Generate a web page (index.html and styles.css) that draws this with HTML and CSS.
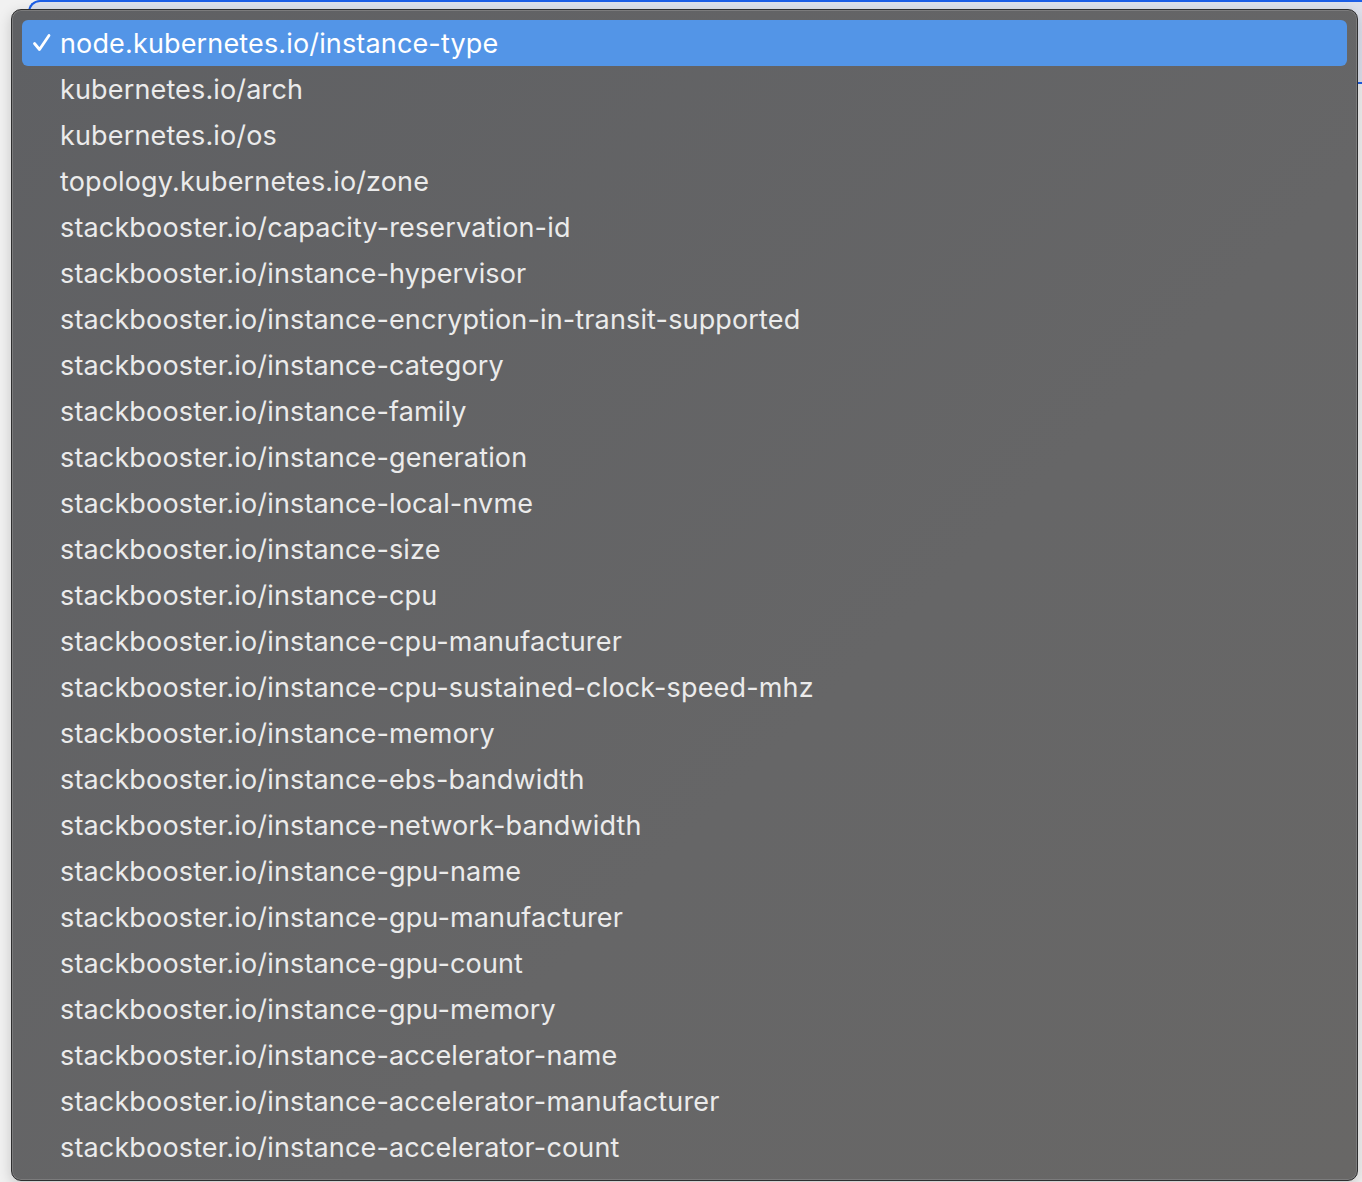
FILE: index.html
```html
<!DOCTYPE html>
<html lang="en">
<head>
<meta charset="utf-8">
<title>Select</title>
<link rel="stylesheet" href="styles.css">
</head>
<body>
<div class="select-field"></div>
<div class="menu" role="listbox">
  <div class="option selected"><svg class="check" width="20" height="20" viewBox="0 0 20 20"><path d="M2.5 10.5 L7.5 16.5 L17 2.5" fill="none" stroke="#ffffff" stroke-width="2.8" stroke-linecap="round" stroke-linejoin="round"/></svg><span class="label">node.kubernetes.io/instance-type</span></div>
  <div class="option"><span class="label">kubernetes.io/arch</span></div>
  <div class="option"><span class="label">kubernetes.io/os</span></div>
  <div class="option"><span class="label">topology.kubernetes.io/zone</span></div>
  <div class="option"><span class="label">stackbooster.io/capacity-reservation-id</span></div>
  <div class="option"><span class="label">stackbooster.io/instance-hypervisor</span></div>
  <div class="option"><span class="label">stackbooster.io/instance-encryption-in-transit-supported</span></div>
  <div class="option"><span class="label">stackbooster.io/instance-category</span></div>
  <div class="option"><span class="label">stackbooster.io/instance-family</span></div>
  <div class="option"><span class="label">stackbooster.io/instance-generation</span></div>
  <div class="option"><span class="label">stackbooster.io/instance-local-nvme</span></div>
  <div class="option"><span class="label">stackbooster.io/instance-size</span></div>
  <div class="option"><span class="label">stackbooster.io/instance-cpu</span></div>
  <div class="option"><span class="label">stackbooster.io/instance-cpu-manufacturer</span></div>
  <div class="option"><span class="label">stackbooster.io/instance-cpu-sustained-clock-speed-mhz</span></div>
  <div class="option"><span class="label">stackbooster.io/instance-memory</span></div>
  <div class="option"><span class="label">stackbooster.io/instance-ebs-bandwidth</span></div>
  <div class="option"><span class="label">stackbooster.io/instance-network-bandwidth</span></div>
  <div class="option"><span class="label">stackbooster.io/instance-gpu-name</span></div>
  <div class="option"><span class="label">stackbooster.io/instance-gpu-manufacturer</span></div>
  <div class="option"><span class="label">stackbooster.io/instance-gpu-count</span></div>
  <div class="option"><span class="label">stackbooster.io/instance-gpu-memory</span></div>
  <div class="option"><span class="label">stackbooster.io/instance-accelerator-name</span></div>
  <div class="option"><span class="label">stackbooster.io/instance-accelerator-manufacturer</span></div>
  <div class="option"><span class="label">stackbooster.io/instance-accelerator-count</span></div>
</div>
</body>
</html>
```

FILE: styles.css
```css
html, body {
  margin: 0;
  padding: 0;
}
body {
  width: 1362px;
  height: 1182px;
  overflow: hidden;
  position: relative;
  background: #f1f1f1;
  font-family: Inter, "Open Sans", "Liberation Sans", sans-serif;
}
.select-field {
  position: absolute;
  left: 28px;
  right: 0;
  top: 0;
  height: 80px;
  border: 2px solid #1c5ee6;
  border-right: none;
  border-radius: 12px 0 0 12px;
  background: #dde1ec;
}
.menu {
  position: absolute;
  left: 11px;
  top: 9px;
  width: 1325px;
  height: 1150px;
  padding: 10px;
  border: 1px solid #2f2f30;
  border-radius: 10px;
  background: linear-gradient(135deg, #5f6063 0%, #666667 60%, #686766 100%);
  box-shadow: inset 0 0 0 1px #7b7b7c, 0 4px 14px rgba(0, 0, 0, 0.18);
  display: flex;
  flex-direction: column;
}
.option {
  height: 46px;
  flex: 0 0 46px;
  display: flex;
  align-items: center;
  position: relative;
  padding-left: 38px;
  border-radius: 6px;
  color: #ebebeb;
  font-size: 27px;
  line-height: 46px;
  letter-spacing: 0.15px;
}
.option.selected {
  background: #5395e7;
  color: #ffffff;
}
.check {
  position: absolute;
  left: 10px;
  top: 13px;
}
.label {
  white-space: nowrap;
  position: relative;
  top: 1px;
}
```
